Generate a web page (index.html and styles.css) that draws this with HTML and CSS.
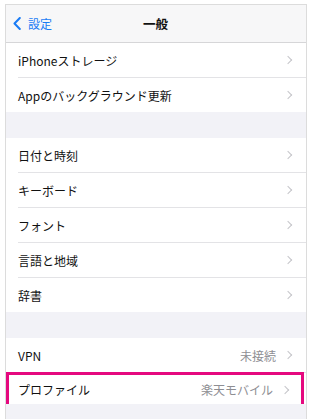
FILE: index.html
```html
<!DOCTYPE html>
<html lang="ja">
<head>
<meta charset="utf-8">
<link rel="stylesheet" href="styles.css">
</head>
<body>
<div class="frame">
  <header class="nav">
    <div class="back">
      <svg class="back-icon" width="8" height="13" viewBox="0 0 8 13"><path d="M6.8 1 L1.5 6.5 L6.8 12" fill="none" stroke="#1a7cf5" stroke-width="2" stroke-linecap="round" stroke-linejoin="round"/></svg>
      <span>設定</span>
    </div>
    <div class="title">一般</div>
  </header>

  <section class="group first">
    <div class="row"><span class="label">iPhoneストレージ</span><span class="chev"></span></div>
    <div class="row"><span class="label">Appのバックグラウンド更新</span><span class="chev"></span></div>
  </section>

  <section class="group">
    <div class="row"><span class="label">日付と時刻</span><span class="chev"></span></div>
    <div class="row"><span class="label">キーボード</span><span class="chev"></span></div>
    <div class="row"><span class="label">フォント</span><span class="chev"></span></div>
    <div class="row"><span class="label">言語と地域</span><span class="chev"></span></div>
    <div class="row"><span class="label">辞書</span><span class="chev"></span></div>
  </section>

  <section class="group">
    <div class="row"><span class="label">VPN</span><span class="value">未接続</span><span class="chev"></span></div>
    <div class="row highlight"><span class="label">プロファイル</span><span class="value">楽天モバイル</span><span class="chev"></span></div>
  </section>
</div>
</body>
</html>
```

FILE: styles.css
```css
html, body {
  margin: 0;
  padding: 0;
  background: #ffffff;
}
body {
  font-family: "Noto Sans CJK JP", "Noto Sans", sans-serif;
  color: #111;
  font-size: 12px;
}
.frame {
  margin: 4px 0 0 5px;
  width: 300px;
  height: 430px;
  border: 1px solid #dcdcdc;
  border-bottom: none;
  background: #f2f2f7;
  overflow: hidden;
}
.nav {
  height: 37px;
  background: #f7f7f8;
  border-bottom: 1px solid #d6d6d8;
  display: grid;
  grid-template-columns: 1fr auto 1fr;
  align-items: center;
}
.back {
  display: flex;
  align-items: center;
  gap: 7px;
  padding-left: 7px;
  color: #1a7cf5;
  font-size: 12px;
}
.back-icon {
  display: block;
}
.title {
  font-weight: 700;
  font-size: 12.5px;
  padding-right: 1px;
}
.group {
  background: #ffffff;
  margin-top: 26px;
}
.group.first {
  margin-top: 0;
}
.row {
  height: 34px;
  margin-left: 12px;
  padding-right: 13px;
  display: flex;
  align-items: center;
  border-bottom: 1px solid #e3e3e6;
}
.row:last-child {
  border-bottom: none;
}
.label {
  flex: 1;
}
.value {
  color: #8e8e93;
  margin-right: 9px;
}
.chev {
  width: 5px;
  height: 5px;
  border-top: 1.3px solid #c5c5c9;
  border-right: 1.3px solid #c5c5c9;
  transform: rotate(45deg);
  margin-right: 2px;
}
.highlight {
  margin-left: 0;
  height: 29px;
  padding-left: 9px;
  padding-right: 11px;
  border: 3px solid #e5097f;
  width: 272px;
  margin-top: -1px;
}
```
